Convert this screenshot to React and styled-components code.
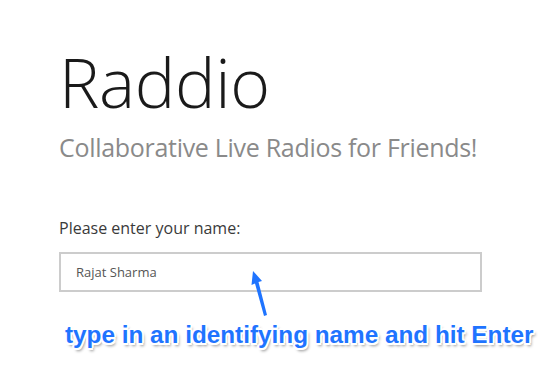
import styled, { createGlobalStyle } from 'styled-components'

const GlobalStyle = createGlobalStyle`
    html, body {
        margin: 0;
        padding: 0;
        background: #ffffff;
    }
    body {
        font-family: "Open Sans", "Liberation Sans", sans-serif;
    }
`

const Page = styled.main`
    width: 550px;
    height: 381px;
    box-sizing: border-box;
    padding: 37px 0 0 59px;
    overflow: hidden;
`

const Title = styled.h1`
    margin: 0;
    font-family: "Open Sans", sans-serif;
    font-weight: 300;
    font-size: 68px;
    line-height: 90px;
    color: #1a1a1a;
    letter-spacing: -0.3px;
`

const Tagline = styled.h2`
    margin: 3px 0 0;
    font-weight: 400;
    font-size: 25px;
    line-height: 34px;
    color: #8a8a8a;
    letter-spacing: -0.3px;
`

const Label = styled.label`
    display: block;
    margin-top: 53px;
    font-size: 16px;
    line-height: 22px;
    color: #3a3a3a;
`

const Field = styled.div`
    position: relative;
    width: 423px;
    margin-top: 13px;
`

const NameInput = styled.input`
    display: block;
    width: 100%;
    height: 40px;
    box-sizing: border-box;
    padding: 0 15px;
    border: 2px solid #cccccc;
    border-radius: 0;
    outline: none;
    font-family: "Open Sans", sans-serif;
    font-size: 13px;
    color: #555555;
    background: #fff;
`

const Arrow = styled.svg`
    position: absolute;
    left: 188px;
    top: 18px;
    width: 24px;
    height: 48px;
    overflow: visible;
`

const Caption = styled.p`
    margin: 29px 0 0 6px;
    font-family: "Liberation Sans", Arial, sans-serif;
    font-weight: 700;
    font-size: 24.3px;
    line-height: 28px;
    color: #1f74ff;
    white-space: nowrap;
    text-shadow:
        -1.5px -1.5px 0 #fff, 1.5px -1.5px 0 #fff,
        -1.5px 1.5px 0 #fff, 1.5px 1.5px 0 #fff,
        0 -2px 0 #fff, 0 2px 0 #fff, -2px 0 0 #fff, 2px 0 0 #fff,
        2px 3px 3px rgba(0, 0, 0, 0.45);
`

export default function App() {
    return (
        <>
            <GlobalStyle />
            <Page>
                <Title>Raddio</Title>
                <Tagline>Collaborative Live Radios for Friends!</Tagline>
                <Label htmlFor="name">Please enter your name:</Label>
                <Field>
                    <NameInput id="name" defaultValue="Rajat Sharma" />
                    <Arrow viewBox="0 0 24 48">
                        <path
                            d="M6 1 L15 11 L11.5 12 L20 45 L17 46 L8 13.5 L4.5 15 Z"
                            fill="#1f74ff"
                        />
                    </Arrow>
                </Field>
                <Caption>type in an identifying name and hit Enter</Caption>
            </Page>
        </>
    )
}
